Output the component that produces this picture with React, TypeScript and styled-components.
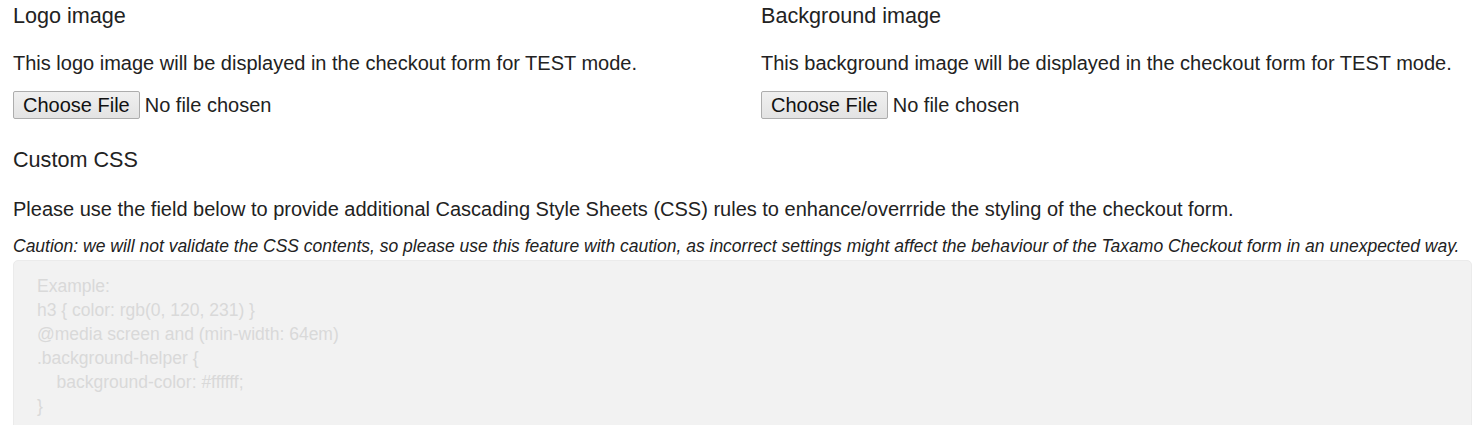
import React from 'react';
import styled, { createGlobalStyle } from 'styled-components';

const GlobalStyle = createGlobalStyle`
  body {
    margin: 0;
    background: #fff;
    font-family: "Liberation Sans", Arial, sans-serif;
    color: #222;
  }
`;

const Page = styled.div`
  padding: 0 10px 0 13px;
`;

const Columns = styled.div`
  display: grid;
  grid-template-columns: 1fr 1fr;
  column-gap: 37px;
`;

const Section = styled.div`
  display: flex;
  flex-direction: column;
`;

const Heading = styled.h3<{ $top?: number }>`
  font-size: 21.6px;
  font-weight: normal;
  margin: ${(p) => p.$top ?? 3}px 0 0;
  line-height: 25px;
`;

const Text = styled.p<{ $top?: number }>`
  font-size: 20px;
  margin: ${(p) => p.$top ?? 23}px 0 0;
  line-height: 24px;
`;

const FileInput = styled.input`
  margin-top: 16px;
  font-family: "Liberation Sans", Arial, sans-serif;
  font-size: 20px;
  color: #222;
  &::file-selector-button {
    font-family: "Liberation Sans", Arial, sans-serif;
    font-size: 20px;
    color: #111;
    background: linear-gradient(#f0f0f0, #e3e3e3);
    border: 1px solid #adadad;
    border-radius: 2px;
    height: 28px;
    padding: 0 9px;
    margin-right: 5px;
  }
`;

const Caution = styled.p`
  font-size: 17.5px;
  font-style: italic;
  margin: 15px 0 0;
  line-height: 21px;
`;

const CssArea = styled.textarea`
  display: block;
  box-sizing: border-box;
  width: 100%;
  height: 200px;
  margin-top: 3px;
  padding: 13px 23px;
  background: #f2f2f2;
  border: 1px solid #ebebeb;
  border-radius: 5px;
  resize: none;
  font-family: "Liberation Sans", Arial, sans-serif;
  font-size: 17.5px;
  line-height: 24px;
  &::placeholder {
    color: #d9d9d9;
  }
`;

const placeholder = `Example:
h3 { color: rgb(0, 120, 231) }
@media screen and (min-width: 64em)
.background-helper {
    background-color: #ffffff;
}`;

export default function App() {
  return (
    <>
      <GlobalStyle />
      <Page>
        <Columns>
          <Section>
            <Heading>Logo image</Heading>
            <Text>This logo image will be displayed in the checkout form for TEST mode.</Text>
            <FileInput type="file" />
          </Section>
          <Section>
            <Heading>Background image</Heading>
            <Text>This background image will be displayed in the checkout form for TEST mode.</Text>
            <FileInput type="file" />
          </Section>
        </Columns>
        <Heading $top={28}>Custom CSS</Heading>
        <Text $top={25}>
          Please use the field below to provide additional Cascading Style Sheets (CSS) rules to enhance/overrride the styling of the checkout form.
        </Text>
        <Caution>
          Caution: we will not validate the CSS contents, so please use this feature with caution, as incorrect settings might affect the behaviour of the Taxamo Checkout form in an unexpected way.
        </Caution>
        <CssArea placeholder={placeholder} />
      </Page>
    </>
  );
}
